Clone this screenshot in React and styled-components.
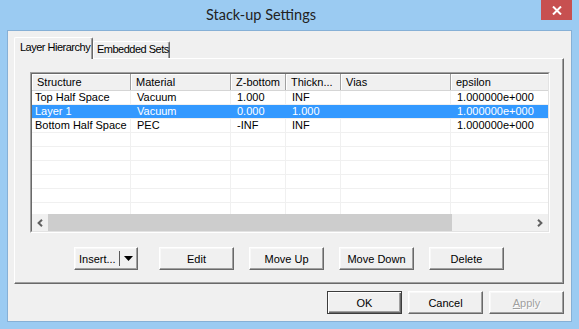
import React from 'react'
import styled, { createGlobalStyle } from 'styled-components'

const GlobalStyle = createGlobalStyle`
  body {
    margin: 0;
    font-family: "Liberation Sans", Arial, sans-serif;
    font-size: 11px;
    color: #000;
  }
`

const Window = styled.div`
  width: 579px;
  height: 329px;
  box-sizing: border-box;
  background: #9bcbf2;
  display: flex;
  flex-direction: column;
  overflow: hidden;
`
const TitleBar = styled.div`
  height: 30px;
  display: flex;
  align-items: flex-start;
`
const Title = styled.div`
  flex: 1;
  text-align: center;
  padding-right: 19px;
  font-family: Lato, "Open Sans", sans-serif;
  font-size: 14.5px;
  line-height: 30px;
  color: #222;
`
const CloseButton = styled.div`
  width: 31px;
  height: 20px;
  margin-right: 7px;
  background: #c75050;
  display: flex;
  align-items: center;
  justify-content: center;
`
const Client = styled.div`
  margin: 0 7px 7px 7px;
  height: 292px;
  box-sizing: border-box;
  border: 1px solid #86b0d6;
  background: #f0f0f0;
  padding: 6px 7px 0 6px;
  display: flex;
  flex-direction: column;
`
const TabStrip = styled.div`
  height: 21px;
  display: flex;
  align-items: flex-end;
  position: relative;
  z-index: 1;
`
const Tab = styled.div`
  box-sizing: border-box;
  height: ${p => (p.$active ? '22px' : '17px')};
  margin-bottom: ${p => (p.$active ? '-1px' : '0')};
  width: ${p => p.$width}px;
  background: #f0f0f0;
  border-top: 1px solid #fff;
  border-left: 1px solid #fff;
  border-right: 1px solid #696969;
  border-radius: 2px 2px 0 0;
  box-shadow: inset -1px 0 #a0a0a0;
  padding-left: ${p => (p.$active ? '5px' : '3px')};
  line-height: ${p => (p.$active ? '18px' : '15px')};
  letter-spacing: -0.5px;
  white-space: nowrap;
`
const TabPanel = styled.div`
  height: 226px;
  box-sizing: border-box;
  border-top: 1px solid #fff;
  border-left: 1px solid #fff;
  border-right: 1px solid #696969;
  border-bottom: 1px solid #696969;
  box-shadow: inset -1px -1px #a0a0a0;
  padding: 13px 0 0 15px;
  display: flex;
  flex-direction: column;
`
const ListFrame = styled.div`
  width: 520px;
  height: 161px;
  box-sizing: border-box;
  border: 1px solid;
  border-color: #a0a0a0 #fff #fff #a0a0a0;
`
const ListInner = styled.div`
  height: 100%;
  box-sizing: border-box;
  border: 1px solid;
  border-color: #696969 #e3e3e3 #e3e3e3 #696969;
  background: #fff;
  display: flex;
  flex-direction: column;
  overflow: hidden;
`
const Grid = styled.div`
  flex: 1;
  overflow: hidden;
`
const HeaderRow = styled.div`
  display: flex;
  height: 17px;
  box-sizing: border-box;
  border-bottom: 1px solid #d5d5d5;
  background: #f0f0f0;
`
const HeaderCell = styled.div`
  flex: 0 0 ${p => p.$width}px;
  box-sizing: border-box;
  border-right: 1px solid #a0a0a0;
  box-shadow: inset 1px 1px #fff;
  padding-left: 5px;
  line-height: 16px;
  white-space: nowrap;
  overflow: hidden;
`
const Row = styled.div`
  display: flex;
  height: 14px;
  box-sizing: border-box;
  border-bottom: 1px solid #f0f0f0;
  background: ${p => (p.$selected ? '#3399ff' : '#fff')};
  color: ${p => (p.$selected ? '#fff' : '#000')};
`
const Cell = styled.div`
  flex: 0 0 ${p => p.$width}px;
  box-sizing: border-box;
  border-right: 1px solid ${p => (p.$selected ? '#3399ff' : '#f0f0f0')};
  padding-left: ${p => (p.$first ? '3px' : '6px')};
  line-height: 13px;
  white-space: nowrap;
  overflow: hidden;
`
const ScrollBar = styled.div`
  height: 17px;
  flex: 0 0 17px;
  display: flex;
  background: #f0f0f0;
`
const ScrollArrow = styled.div`
  width: 16px;
  display: flex;
  align-items: center;
  justify-content: center;
`
const ScrollTrack = styled.div`
  flex: 1;
  display: flex;
`
const ScrollThumb = styled.div`
  width: ${p => p.$width}px;
  background: #cdcdcd;
`
const ActionRow = styled.div`
  display: flex;
  justify-content: center;
  gap: 15px;
  margin: 14px 0 0 -15px;
`
const Button = styled.div`
  box-sizing: border-box;
  width: ${p => p.$width || 75}px;
  height: 23px;
  background: #f0f0f0;
  border: 1px solid;
  border-color: ${p => (p.$default ? '#3c3c3c' : '#fff #696969 #696969 #fff')};
  box-shadow: ${p =>
    p.$default
      ? 'inset 1px 1px #fff, inset -1px -1px #696969, inset -2px -2px #a0a0a0'
      : 'inset -1px -1px #a0a0a0, inset 1px 1px #f8f8f8'};
  display: flex;
  align-items: center;
  justify-content: center;
  color: ${p => (p.$disabled ? '#a0a0a0' : '#000')};
  text-shadow: ${p => (p.$disabled ? '1px 1px #fff' : 'none')};
  white-space: nowrap;
`
const SplitButton = styled(Button)`
  justify-content: flex-start;
  padding-left: 4px;
  margin-right: 6px;
`
const SplitDivider = styled.span`
  width: 1px;
  height: 15px;
  background: #5a5a5a;
  margin: 0 4px 0 3px;
`
const Underline = styled.span`
  text-decoration: underline;
`
const DialogButtons = styled.div`
  display: flex;
  justify-content: flex-end;
  gap: 6px;
  margin-top: 7px;
`

const columns = [
  { name: 'Structure', width: 99 },
  { name: 'Material', width: 100 },
  { name: 'Z-bottom', width: 55 },
  { name: 'Thickn...', width: 55 },
  { name: 'Vias', width: 110 },
  { name: 'epsilon', width: 170 },
]

const rows = [
  ['Top Half Space', 'Vacuum', '1.000', 'INF', '', '1.000000e+000'],
  ['Layer 1', 'Vacuum', '0.000', '1.000', '', '1.000000e+000'],
  ['Bottom Half Space', 'PEC', '-INF', 'INF', '', '1.000000e+000'],
]

const Chevron = ({ dir }) => (
  <svg width="6" height="8" viewBox="0 0 6 8">
    <path
      d={dir === 'left' ? 'M5 0.8 L1.6 4 L5 7.2' : 'M1 0.8 L4.4 4 L1 7.2'}
      fill="none"
      stroke="#606060"
      strokeWidth="2"
    />
  </svg>
)

export default function App() {
  const empty = Array.from({ length: 7 }, () => ['', '', '', '', '', ''])
  return (
    <>
      <GlobalStyle />
      <Window>
        <TitleBar>
          <Title>Stack-up Settings</Title>
          <CloseButton>
            <svg width="10" height="9" viewBox="0 0 10 9">
              <path d="M1 0.5 L9 8.5 M9 0.5 L1 8.5" stroke="#fff" strokeWidth="2" />
            </svg>
          </CloseButton>
        </TitleBar>
        <Client>
          <TabStrip>
            <Tab $active $width={79}>Layer Hierarchy</Tab>
            <Tab $width={77}>Embedded Sets</Tab>
          </TabStrip>
          <TabPanel>
            <ListFrame>
              <ListInner>
                <Grid>
                  <HeaderRow>
                    {columns.map(c => (
                      <HeaderCell key={c.name} $width={c.width}>{c.name}</HeaderCell>
                    ))}
                  </HeaderRow>
                  {[...rows, ...empty].map((r, i) => (
                    <Row key={i} $selected={i === 1}>
                      {r.map((v, j) => (
                        <Cell key={j} $width={columns[j].width} $first={j === 0} $selected={i === 1}>
                          {v}
                        </Cell>
                      ))}
                    </Row>
                  ))}
                </Grid>
                <ScrollBar>
                  <ScrollArrow><Chevron dir="left" /></ScrollArrow>
                  <ScrollTrack>
                    <ScrollThumb $width={404} />
                  </ScrollTrack>
                  <ScrollArrow><Chevron dir="right" /></ScrollArrow>
                </ScrollBar>
              </ListInner>
            </ListFrame>
            <ActionRow>
              <SplitButton $width={64}>
                Insert...
                <SplitDivider />
                <svg width="9" height="5" viewBox="0 0 9 5">
                  <path d="M0 0 H9 L4.5 5 Z" fill="#000" />
                </svg>
              </SplitButton>
              <Button>Edit</Button>
              <Button>Move Up</Button>
              <Button>Move Down</Button>
              <Button>Delete</Button>
            </ActionRow>
          </TabPanel>
          <DialogButtons>
            <Button $default>OK</Button>
            <Button>Cancel</Button>
            <Button $disabled><span><Underline>A</Underline>pply</span></Button>
          </DialogButtons>
        </Client>
      </Window>
    </>
  )
}
